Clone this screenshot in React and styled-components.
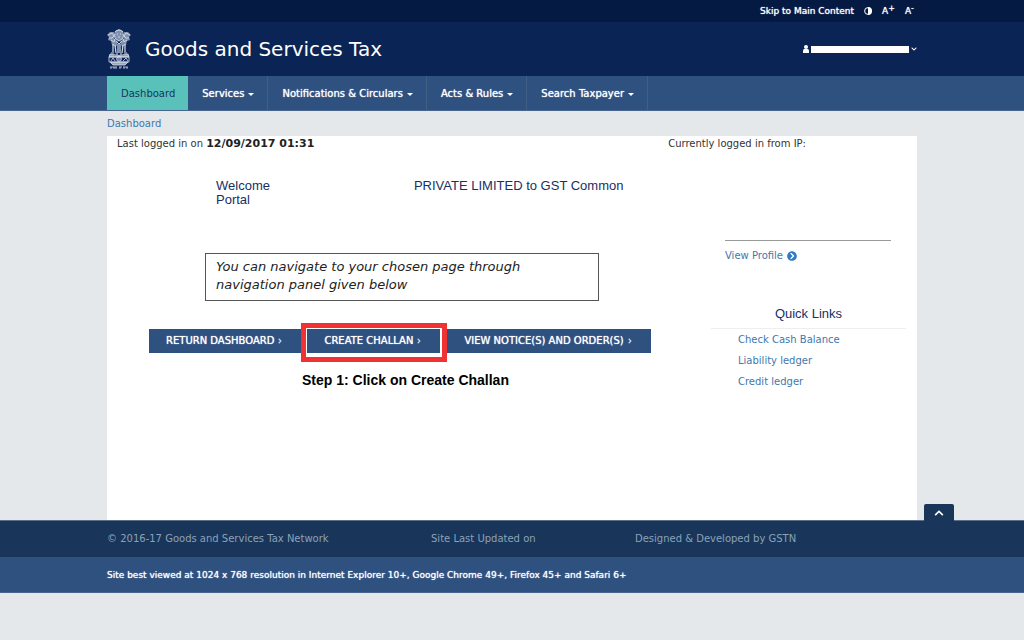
import * as React from 'react'

import { FaAngleRight, FaChevronCircleRight, FaChevronDown, FaChevronUp } from 'react-icons/fa'
import styled, { createGlobalStyle } from 'styled-components'

const GlobalStyle = createGlobalStyle`
	* {
		box-sizing: border-box;
	}

	body {
		margin: 0;
		background: #e4e8eb;
		color: #333;
		font-family: Verdana, 'DejaVu Sans', sans-serif;
		font-size: 10px;
		line-height: 14px;
	}

	a {
		color: #4277ad;
		text-decoration: none;
	}

	button {
		border: 0;
		margin: 0;
		padding: 0;
		background: none;
		color: inherit;
		font: inherit;
		text-shadow: inherit;
		cursor: pointer;
	}
`

const Container = styled.div`
	width: 100%;
	max-width: 810px;
	margin: 0 auto;
`

const SkipBar = styled.div`
	background: #051a43;
	color: #fff;
`

const SkipInner = styled(Container)`
	display: flex;
	justify-content: flex-end;
	align-items: center;
	gap: 10px;
	height: 22px;
	padding-right: 3px;
	font-size: 9px;
	text-shadow: 0 0 1px #fff;

	a {
		color: #fff;
	}

	button {
		display: flex;
	}

	sup {
		font-size: 8px;
		line-height: 10px;
	}
`

const Header = styled.header`
	background: #0a2555;
	color: #fff;
`

const HeaderInner = styled(Container)`
	display: flex;
	align-items: center;
	height: 54px;
`

const Title = styled.h1`
	flex: 1;
	margin: 0 0 0 14px;
	font-size: 20px;
	font-weight: 400;
	line-height: 24px;
`

const UserButton = styled.button`
	display: flex;
	align-items: center;
	gap: 2px;
`

const UserName = styled.span`
	width: 98px;
	height: 7px;
	background: #fff;
`

const Nav = styled.nav`
	background: #2f5180;
	border-bottom: 1px solid #47658f;
`

const NavList = styled(Container).attrs({ as: 'ul' })`
	display: flex;
	padding: 0;
	list-style: none;
`

const NavItem = styled.li`
	display: flex;
	border-right: ${({ $active }) => ($active ? '0' : '1px solid #415f83')};
	background: ${({ $active }) => ($active ? '#59c1b9' : 'transparent')};
	color: ${({ $active }) => ($active ? '#17365d' : '#fff')};
	text-shadow: ${({ $active }) => ($active ? 'none' : '0 0 1px #fff')};

	a,
	button {
		display: flex;
		align-items: center;
		gap: 4px;
		height: 34px;
		padding: 2px 13px 0 14px;
		color: inherit;
	}
`

const Caret = styled.span`
	border: 3px solid transparent;
	border-top-color: #fff;
	border-bottom: 0;
`

const Breadcrumb = styled(Container)`
	padding: 6px 0 5px;
`

const Panel = styled(Container).attrs({ as: 'main' })`
	min-height: 384px;
	background: #fff;
`

const LoginInfo = styled.div`
	display: flex;
	justify-content: space-between;
	padding: 1px 111px 0 10px;
	color: #333;

	b {
		color: #222;
		font-size: 11px;
	}
`

const Columns = styled.div`
	display: flex;
`

const Main = styled.section`
	flex: 1;
	padding: 28px 0 0 42px;
`

const Welcome = styled.h2`
	display: flex;
	gap: 144px;
	margin: 0 0 46px 67px;
	color: #17305f;
	font-family: Arial, 'Liberation Sans', sans-serif;
	font-size: 13px;
	font-weight: 400;
	line-height: 14px;
`

const Notice = styled.p`
	width: 394px;
	margin: 0 0 22px 56px;
	padding: 4px 10px 6px;
	border: 1px solid #555;
	color: #222;
	font-size: 13px;
	font-style: italic;
	line-height: 18px;
`

const Actions = styled.div`
	display: flex;
	align-items: flex-start;
`

const ActionButton = styled.button`
	display: flex;
	align-items: center;
	gap: 2px;
	height: 24px;
	margin-top: ${({ $inset }) => ($inset ? '0' : '6px')};
	padding: 0 17px;
	background: #2f5180;
	color: #fff;
	white-space: nowrap;
	text-shadow: 0 0 1px #fff;

	svg {
		opacity: 0.75;
	}
`

const Highlight = styled.div`
	padding: 1px 2px 4px 1px;
	border: 5px solid #f03232;
`

const Step = styled.p`
	margin: 10px 0 0 153px;
	color: #000;
	font-family: Arial, 'Liberation Sans', sans-serif;
	font-size: 14px;
	font-weight: 700;
	line-height: 16px;
`

const Aside = styled.aside`
	width: 195px;
	margin: 89px 11px 0 0;
`

const Profile = styled.div`
	margin: 0 15px 0 14px;
	padding-top: 8px;
	border-top: 1px solid #999;

	a {
		display: flex;
		align-items: center;
		gap: 4px;
	}
`

const QuickTitle = styled.h3`
	margin: 43px 0 0;
	padding-bottom: 6px;
	border-bottom: 1px solid #eee;
	color: #17305f;
	font-family: Arial, 'Liberation Sans', sans-serif;
	font-size: 13px;
	font-weight: 400;
	line-height: 16px;
	text-align: center;
`

const QuickList = styled.ul`
	margin: 0;
	padding: 0 0 0 27px;
	list-style: none;
	line-height: 21px;
`

const Footer = styled.footer`
	position: relative;
	background: #19355a;
	border-top: 1px solid #5b6f88;
	color: #8ba2b8;
`

const FooterRow = styled(Container)`
	display: grid;
	grid-template-columns: 2fr 204px 282px;
	align-items: center;
	height: 36px;
`

const BestViewed = styled.div`
	padding-top: 1px;
	background: #2f5180;
	border-bottom: 1px solid #47658f;
	color: #fff;
	font-size: 9px;
	line-height: 34px;
	text-shadow: 0 0 1px #fff;
`

const TopButton = styled.button`
	position: absolute;
	right: 70px;
	bottom: 100%;
	display: flex;
	align-items: center;
	justify-content: center;
	width: 30px;
	height: 17px;
	border-radius: 2px 2px 0 0;
	background: #19355a;
	color: #fff;
`

const Emblem = () => (
	<svg width="24" height="41" viewBox="0 0 24 41" fill="none" stroke="#d5dce8" aria-hidden="true">
		<path d="M8 2 12 0l4 2 1 3-1 5-4 2-4-2-1-5z" fill="#8190ad" stroke="none" />
		<path d="M7 3 3 3 0 6l2 2-1 3 3 1 1 4 4 2 2-5-4-4zM17 3h4l3 3-2 2 1 3-3 1-1 4-4 2-2-5 4-4z" fill="#8190ad" stroke="none" />
		<path d="M8 3q4-4 8 0M8 5q-2 4 4 7 6-3 4-7M10 5h1M13 5h1M11 8h2M1 6l4-2 2 3-2 2H2M23 6l-4-2-2 3 2 2h3M4 11l3 2 1-3M20 11l-3 2-1-3M9 12l3 3 3-3" strokeWidth=".9" />
		<path d="M6 15v8M8 16l1 8M11 15v9M13 15v9M16 16l-1 8M18 15v8M4 24h3M9 25h2M13 25h2M17 24h3" strokeWidth="1.2" />
		<path d="M3 25q9 3 18 0l1 3H2zM3 33h18l-3 3H6z" fill="#9aa7be" strokeWidth=".8" />
		<path d="M2 28h20v5H2zM4 32l2-3 2 3M16 32l3-3 2 3" strokeWidth=".8" />
		<circle cx="12" cy="30" r="2.3" />
		<path d="M12 28v4M10 30h4" strokeWidth=".6" />
		<path d="M3 38h7M12 38h3M16 38h5M4 38v2M7 38v2M9 38v2M13 38v2M17 38v2M20 38v2" strokeWidth=".8" />
	</svg>
)

const ContrastIcon = () => (
	<svg width="8" height="8" viewBox="0 0 8 8" aria-hidden="true">
		<circle cx="4" cy="4" r="3.4" fill="none" stroke="#fff" />
		<path d="M4 0a4 4 0 0 1 0 8z" fill="#fff" />
	</svg>
)

const UserIcon = () => (
	<svg width="6" height="8" viewBox="0 0 6 8" fill="#fff" aria-hidden="true">
		<circle cx="3" cy="2" r="2" />
		<path d="M0 8V5.5Q0 4 1.4 4h3.2Q6 4 6 5.5V8z" />
	</svg>
)

const menus = ['Services', 'Notifications & Circulars', 'Acts & Rules', 'Search Taxpayer']

const quickLinks = ['Check Cash Balance', 'Liability ledger', 'Credit ledger']

const App = () => (
	<>
		<GlobalStyle />
		<SkipBar>
			<SkipInner>
				<a href="#main">Skip to Main Content</a>
				<button type="button" aria-label="Contrast">
					<ContrastIcon />
				</button>
				<button type="button">
					A<sup>+</sup>
				</button>
				<button type="button">
					A<sup>-</sup>
				</button>
			</SkipInner>
		</SkipBar>
		<Header>
			<HeaderInner>
				<Emblem />
				<Title>Goods and Services Tax</Title>
				<UserButton type="button" aria-label="Account">
					<UserIcon />
					<UserName />
					<FaChevronDown size={6} />
				</UserButton>
			</HeaderInner>
		</Header>
		<Nav>
			<NavList>
				<NavItem $active>
					<a href="#dashboard">Dashboard</a>
				</NavItem>
				{menus.map(item => (
					<NavItem key={item}>
						<button type="button">
							{item}
							<Caret />
						</button>
					</NavItem>
				))}
			</NavList>
		</Nav>
		<Breadcrumb>
			<a href="#dashboard">Dashboard</a>
		</Breadcrumb>
		<Panel id="main">
			<LoginInfo>
				<span>
					Last logged in on <b>12/09/2017 01:31</b>
				</span>
				<span>Currently logged in from IP:</span>
			</LoginInfo>
			<Columns>
				<Main>
					<Welcome>
						<span>
							Welcome
							<br />
							Portal
						</span>
						<span>PRIVATE LIMITED to GST Common</span>
					</Welcome>
					<Notice>You can navigate to your chosen page through navigation panel given below</Notice>
					<Actions>
						<ActionButton type="button">
							RETURN DASHBOARD
							<FaAngleRight size={8} />
						</ActionButton>
						<Highlight>
							<ActionButton type="button" $inset>
								CREATE CHALLAN
								<FaAngleRight size={8} />
							</ActionButton>
						</Highlight>
						<ActionButton type="button">
							VIEW NOTICE(S) AND ORDER(S)
							<FaAngleRight size={8} />
						</ActionButton>
					</Actions>
					<Step>Step 1: Click on Create Challan</Step>
				</Main>
				<Aside>
					<Profile>
						<a href="#profile">
							View Profile
							<FaChevronCircleRight size={10} color="#2f7bc8" />
						</a>
					</Profile>
					<QuickTitle>Quick Links</QuickTitle>
					<QuickList>
						{quickLinks.map(item => (
							<li key={item}>
								<a href="#ledger">{item}</a>
							</li>
						))}
					</QuickList>
				</Aside>
			</Columns>
		</Panel>
		<Footer>
			<TopButton type="button" aria-label="Top">
				<FaChevronUp size={10} />
			</TopButton>
			<FooterRow>
				<span>© 2016-17 Goods and Services Tax Network</span>
				<span>Site Last Updated on</span>
				<span>Designed & Developed by GSTN</span>
			</FooterRow>
			<BestViewed>
				<Container>
					Site best viewed at 1024 x 768 resolution in Internet Explorer 10+, Google Chrome 49+, Firefox 45+ and Safari 6+
				</Container>
			</BestViewed>
		</Footer>
	</>
)

export default App
